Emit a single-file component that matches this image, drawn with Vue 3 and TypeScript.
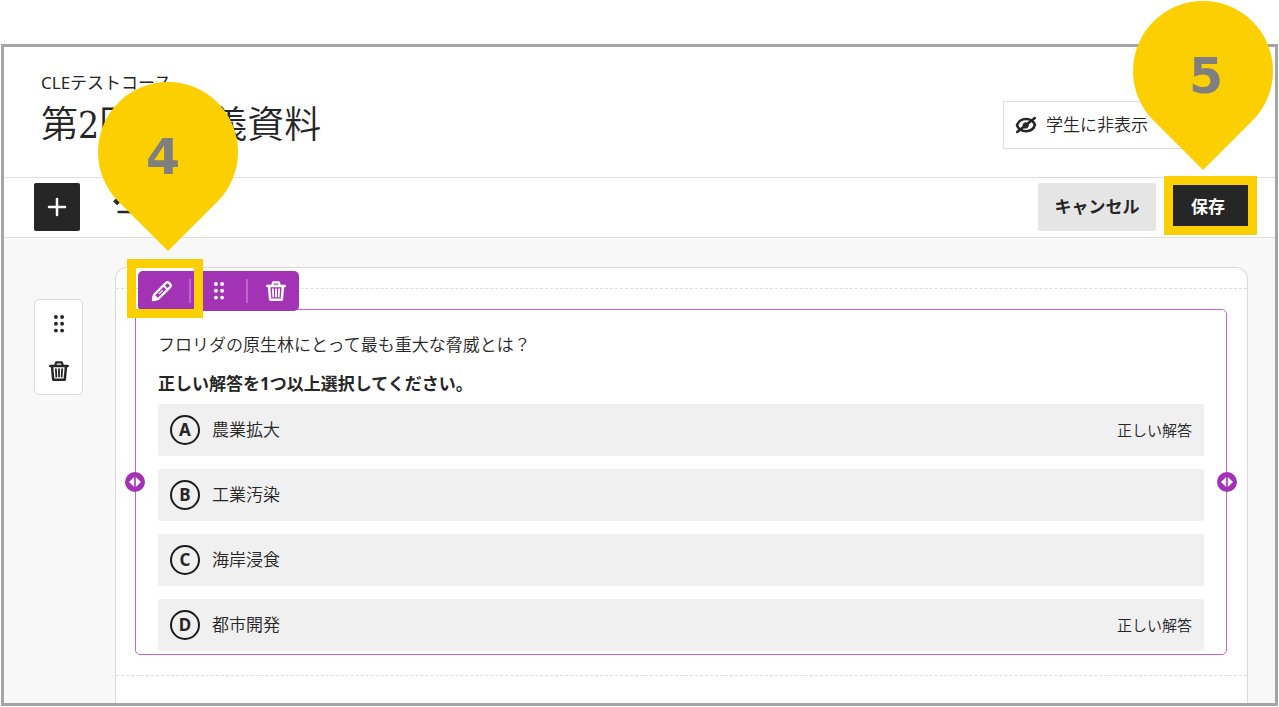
<script setup lang="ts">
import { h, type FunctionalComponent } from 'vue'

interface Answer {
  letter: string
  text: string
  correct: boolean
}

const answers: Answer[] = [
  { letter: 'A', text: '農業拡大', correct: true },
  { letter: 'B', text: '工業汚染', correct: false },
  { letter: 'C', text: '海岸浸食', correct: false },
  { letter: 'D', text: '都市開発', correct: true },
]

const DotsIcon: FunctionalComponent = () =>
  h(
    'svg',
    { width: 12, height: 20, viewBox: '0 0 12 20', fill: 'currentColor', 'aria-hidden': 'true' },
    [3, 9.8, 16.6].flatMap((cy) => [2.9, 9.1].map((cx) => h('circle', { cx, cy, r: 1.95 }))),
  )

const TrashIcon: FunctionalComponent = () =>
  h(
    'svg',
    {
      width: 20,
      height: 20,
      viewBox: '0 0 20 20',
      fill: 'none',
      stroke: 'currentColor',
      'stroke-linecap': 'round',
      'stroke-linejoin': 'round',
      'aria-hidden': 'true',
    },
    [
      h('path', { d: 'M1.3 4.9h17.4', 'stroke-width': 2.5 }),
      h('path', { d: 'M6.2 4.4L7.2 1.4h5.6l1 3', 'stroke-width': 2.2 }),
      h('path', { d: 'M3 5.2L4.2 18.7h11.6L17 5.2', 'stroke-width': 2.5 }),
      h('path', { d: 'M6.9 8.2l.4 7.4M10 8.2v7.4M13.1 8.2l-.4 7.4', 'stroke-width': 1.8 }),
    ],
  )

const HandleIcon: FunctionalComponent = () =>
  h('svg', { width: 20, height: 20, viewBox: '0 0 20 20', 'aria-hidden': 'true' }, [
    h('path', { d: 'M9.2 5v10L4 10zM10.8 5v10l5.2-5z', fill: '#fff' }),
  ])

const Pin: FunctionalComponent<{ label: string; x: number }> = (props) =>
  h('svg', { width: 140, height: 170, viewBox: '0 0 140 170', role: 'img', 'aria-label': props.label }, [
    h('path', { d: 'M20.5 119.5A70 70 0 1 1 119.5 119.5L70 169z', fill: '#fcd000' }),
    h(
      'text',
      {
        x: props.x,
        y: 92,
        'text-anchor': 'middle',
        'font-family': '"DejaVu Sans", sans-serif',
        'font-weight': 700,
        'font-size': 49,
        fill: '#7f7f7f',
      },
      props.label,
    ),
  ])
Pin.props = ['label', 'x']
</script>

<template>
  <div class="page">
    <main class="frame">
      <header class="head">
        <div class="titles">
          <p class="course">CLEテストコース</p>
          <h1 class="title">第2回　講義資料</h1>
        </div>
        <button type="button" class="visibility">
          <svg width="22" height="18" viewBox="0 0 22 18" fill="none" stroke="currentColor" stroke-width="2.5" stroke-linecap="round" aria-hidden="true">
            <path d="M2 9.200C3.500 5 7 3 11 3s7.500 2 9 6c-1.500 4.200-5 6.200-9 6.200S3.500 13.200 2 9.200z" />
            <path d="M8.600 10.800a2.600 2.600 0 0 1 3.800-3.200M12.900 8.600a2.600 2.600 0 0 1-3.200 3" stroke-width="1.800" />
            <path d="M2.200 16L19.800 2" />
          </svg>
          <span>学生に非表示</span>
        </button>
      </header>

      <div class="bar">
        <button type="button" class="add" aria-label="追加">
          <svg width="20" height="20" viewBox="0 0 20 20" stroke="currentColor" stroke-width="2.500" stroke-linecap="round" aria-hidden="true">
            <path d="M10 2v16M2 10h16" />
          </svg>
        </button>
        <button type="button" class="outline" aria-label="アウトライン">
          <svg width="22" height="20" viewBox="0 0 22 20" fill="none" stroke="currentColor" stroke-width="2.300" stroke-linecap="round" aria-hidden="true">
            <path d="M4.500 2l3.200 3.200-2.600 2.600-3.200-3.200z" fill="currentColor" stroke-width="1" stroke-linejoin="round" />
            <path d="M11 4.800h9M6.500 15h13.500" />
          </svg>
        </button>
        <div class="actions">
          <button type="button" class="cancel">キャンセル</button>
          <div class="save-wrap">
            <button type="button" class="save">保存</button>
            <span class="mark mark-save"></span>
            <Pin class="pin pin-save" label="5" :x="73" />
          </div>
        </div>
      </div>

      <div class="canvas">
        <div class="side">
          <button type="button" class="icon" aria-label="移動"><DotsIcon /></button>
          <button type="button" class="icon" aria-label="削除"><TrashIcon /></button>
        </div>

        <div class="card">
          <div class="row-area">
            <section class="block">
              <div class="tools">
                <button type="button" class="tool" aria-label="編集">
                  <svg width="22" height="22" viewBox="0 0 22 22" fill="none" stroke="currentColor" stroke-width="2.300" stroke-linejoin="round" aria-hidden="true">
                    <path d="M2 20l1.200-5.400L14.800 3q1.600-1.500 3.100-.1l1.200 1.200q1.500 1.500 0 3L7.400 18.800z" />
                    <path d="M12.400 5.400l4.200 4.200" stroke-width="1.900" />
                    <path d="M8 14l3.600-3.600" stroke-width="1.200" />
                    <path d="M2 20l1-4.400 3.400 3.400z" fill="currentColor" />
                  </svg>
                </button>
                <button type="button" class="tool" aria-label="移動"><DotsIcon /></button>
                <button type="button" class="tool" aria-label="削除"><TrashIcon /></button>
                <span class="mark mark-edit"></span>
                <Pin class="pin pin-edit" label="4" :x="65" />
              </div>

              <p class="question">フロリダの原生林にとって最も重大な脅威とは？</p>
              <p class="hint">正しい解答を1つ以上選択してください。</p>
              <ul class="answers">
                <li v-for="a in answers" :key="a.letter" class="answer">
                  <span class="letter">{{ a.letter }}</span>
                  <span>{{ a.text }}</span>
                  <span v-if="a.correct" class="correct">正しい解答</span>
                </li>
              </ul>

              <button type="button" class="handle handle-left" aria-label="左の幅を変更"><HandleIcon /></button>
              <button type="button" class="handle handle-right" aria-label="右の幅を変更"><HandleIcon /></button>
            </section>
          </div>
        </div>
      </div>
    </main>
  </div>
</template>

<style>
body {
  margin: 0;
  background: #fff;
}
</style>

<style scoped>
* {
  box-sizing: border-box;
}

.page {
  display: flex;
  min-height: 100vh;
  padding: 44px 1px 1px;
  color: #262626;
  font-family: "Noto Sans", "Noto Sans CJK JP", sans-serif;
  font-size: 17px;
  font-weight: 350;
  line-height: 24px;
}

p,
h1,
ul {
  margin: 0;
  padding: 0;
}

button {
  display: flex;
  align-items: center;
  justify-content: center;
  margin: 0;
  padding: 0;
  border: 0;
  background: none;
  color: inherit;
  font: inherit;
  cursor: pointer;
}

svg {
  display: block;
  flex: none;
}

.frame {
  display: flex;
  flex: 1;
  flex-direction: column;
  min-width: 0;
  border: 3px solid #a5a5a5;
}

.head {
  display: flex;
  align-items: flex-start;
  justify-content: space-between;
  padding: 24px 72px 27px 37px;
  border-bottom: 1px solid #dedede;
}

.course {
  font-weight: 400;
}

.title {
  margin-top: 7px;
  font-family: "DejaVu Serif Condensed", "Liberation Serif", "Noto Sans CJK JP", serif;
  font-size: 37px;
  font-weight: 350;
  line-height: 48px;
}

.visibility {
  justify-content: flex-start;
  gap: 9px;
  width: 200px;
  height: 48px;
  margin-top: 30px;
  padding: 0 11px;
  border: 1px solid #dcdcdc;
  background: #fff;
}

.bar {
  display: flex;
  align-items: center;
  padding: 5px 27px 6px 30px;
  border-bottom: 1px solid #dedede;
}

.add {
  width: 46px;
  height: 48px;
  border-radius: 2px;
  background: #262626;
  color: #fff;
}

.outline {
  margin-left: 32px;
}

.actions {
  display: flex;
  gap: 12px;
  margin-left: auto;
}

.cancel,
.save {
  font-weight: 700;
}

.cancel {
  width: 118px;
  height: 48px;
  border-radius: 2px;
  background: #e5e5e5;
}

.save-wrap {
  position: relative;
}

.save {
  width: 80px;
  height: 48px;
  background: #262626;
  color: #fff;
}

.mark {
  position: absolute;
  border: 9px solid #fcd000;
  pointer-events: none;
}

.mark-save {
  inset: -7px -9px -4px -4px;
}

.pin {
  position: absolute;
  z-index: 2;
  pointer-events: none;
}

.pin-save {
  top: -182px;
  left: -35px;
}

.canvas {
  display: flex;
  flex: 1;
  gap: 32px;
  padding: 29px 27px 0 30px;
  background: #f8f8f8;
}

.side {
  display: flex;
  flex: none;
  flex-direction: column;
  align-self: flex-start;
  width: 49px;
  margin-top: 32px;
  border: 1px solid #dcdcdc;
  border-radius: 5px;
  background: #fff;
}

.icon {
  height: 47px;
}

.card {
  flex: 1;
  min-width: 0;
  padding: 20px 0;
  border: 1px solid #dadada;
  border-bottom: 0;
  border-radius: 12px 12px 0 0;
  background: #fff;
}

.row-area {
  padding: 20px 20px 20px 19px;
  border: 1px dashed #dedede;
  border-width: 1px 0;
}

.block {
  position: relative;
  padding: 23px 22px 3px;
  border: 1px solid #bf66cf;
  border-radius: 5px;
}

.tools {
  position: absolute;
  top: -39px;
  left: 2px;
  display: flex;
  height: 40px;
  border-radius: 5px;
  background: #a333b5;
  color: #fff;
}

.tool {
  position: relative;
  width: 57px;
}

.tool:first-child {
  width: 53px;
  padding-right: 5px;
}

.tool:nth-child(2) {
  padding-right: 2px;
}

.tool:nth-child(3) {
  width: 51px;
  padding-left: 4px;
}

.tool:first-child::after,
.tool:nth-child(2)::after {
  position: absolute;
  top: 8px;
  right: 0;
  width: 2px;
  height: 24px;
  background: #bb66c8;
  content: "";
}

.mark-edit {
  top: -12px;
  left: -11px;
  width: 76px;
  height: 59px;
}

.pin-edit {
  top: -189px;
  left: -40px;
}

.hint {
  margin: 15px 0 8px;
  font-weight: 700;
}

.answers {
  display: grid;
  gap: 13px;
  list-style: none;
}

.answer {
  display: flex;
  align-items: center;
  gap: 12px;
  height: 52px;
  padding: 0 12px;
  border-radius: 2px;
  background: #f0f0f0;
}

.letter {
  display: flex;
  align-items: center;
  justify-content: center;
  width: 30px;
  height: 30px;
  border: 2px solid #1c1c1c;
  border-radius: 50%;
  font-weight: 700;
}

.correct {
  margin-left: auto;
  font-size: 15px;
}

.handle {
  position: absolute;
  top: 50%;
  width: 20px;
  height: 20px;
  margin-top: -10px;
  border-radius: 50%;
  background: #a333b5;
}

.handle-left {
  left: -11px;
}

.handle-right {
  right: -11px;
}
</style>
